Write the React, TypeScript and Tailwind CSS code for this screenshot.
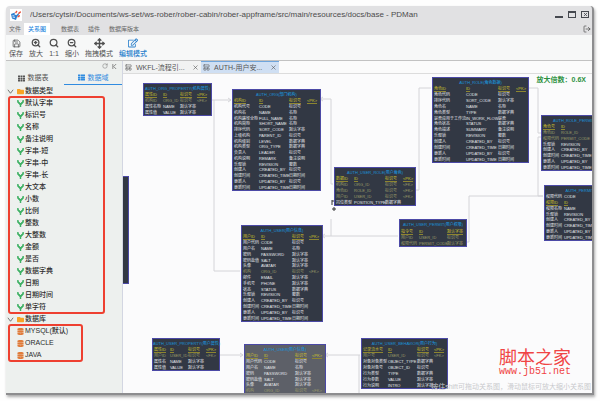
import React from 'react';
import { LayoutPanelTop, LogOut, Move, RotateCw, Save, Search, ZoomIn, ZoomOut, X } from 'lucide-react';
import { FaDatabase, FaFolder, FaRegEdit, FaTh, FaThList } from 'react-icons/fa';

type Row = [string, string, string?, string?];

interface TableNode {
  title: string;
  x: number;
  y: number;
  width: number;
  height: number;
  cols: number[];
  rows: Row[];
  ghost?: boolean;
}

const DATA_TYPES = [
  '默认字串',
  '标识号',
  '名称',
  '备注说明',
  '字串-短',
  '字串-中',
  '字串-长',
  '大文本',
  '小数',
  '比例',
  '整数',
  '大整数',
  '金额',
  '是否',
  '数据字典',
  '日期',
  '日期时间',
  '单字符',
];

const DATABASES = ['MYSQL(默认)', 'ORACLE', 'JAVA'];

const MENUS = ['文件', '关系图', '数据表', '插件', '数据库版本'];

const AUDIT_ROWS: Row[] = [
  ['乐观锁', 'REVISION', '整数'],
  ['创建人', 'CREATED_BY', '标识号'],
  ['创建时间', 'CREATED_TIME', '日期时间'],
  ['更新人', 'UPDATED_BY', '标识号'],
  ['更新时间', 'UPDATED_TIME', '日期时间'],
];

const USER_ROWS: Row[] = [
  ['用户ID', 'ID', '标识号', '<PK>'],
  ['用户代码', 'CODE', '标识号'],
  ['用户名', 'NAME', '名称'],
  ['密码', 'PASSWORD', '默认字串'],
  ['密码盐值', 'SALT', '默认字串'],
  ['头像', 'AVATAR', '默认字串'],
  ['机构', 'ORG_ID', '标识号', '<FK>'],
  ['邮件', 'EMAIL', '默认字串'],
  ['手机号', 'PHONE', '默认字串'],
  ['状态', 'STATUS', '数据字典'],
  ...AUDIT_ROWS,
];

const NODES: TableNode[] = [
  {
    title: 'AUTH_ORG_PROPERTY(机构属性)',
    x: 20, y: 9, width: 68, height: 33,
    cols: [18, 17, 17, 15],
    rows: [
      ['属性ID', 'ID', '标识号', '<PK>'],
      ['机构ID', 'ORG_ID', '标识号', '<FK>'],
      ['属性名称', 'NAME', '默认字串'],
      ['属性值', 'VALUE', '默认字串'],
    ],
  },
  {
    title: 'AUTH_ORG(部门机构)',
    x: 109, y: 15, width: 88, height: 102,
    cols: [25, 30, 18, 14],
    rows: [
      ['机构ID', 'ID', '标识号', '<PK>'],
      ['机构代号', 'CODE', '标识号'],
      ['机构名', 'NAME', '名称'],
      ['机构路径全称', 'FULL_NAME', '名称'],
      ['机构简称', 'SHORT_NAME', '名称'],
      ['排序代码', 'SORT_CODE', '默认字串'],
      ['上级机构', 'PARENT_ID', '标识号'],
      ['机构级别', 'LEVEL', '数据字典'],
      ['机构类型', 'ORG_TYPE', '数据字典'],
      ['负责人', 'LEADER', '标识号'],
      ['机构说明', 'REMARK', '备注说明'],
      ...AUDIT_ROWS,
    ],
  },
  {
    title: 'AUTH_ROLE(角色数据)',
    x: 309, y: 3, width: 96, height: 86,
    cols: [32, 32, 18, 13],
    rows: [
      ['角色ID', 'ID', '标识号', '<PK>'],
      ['角色代码', 'CODE', '标识号'],
      ['排序代码', 'SORT_CODE', '默认字串'],
      ['角色名', 'NAME', '名称'],
      ['角色类型', 'TYPE', '数据字典'],
      ['是否应用于工作流', 'IN_WORK_FLOW', '是否'],
      ['角色状态', 'STATUS', '数据字典'],
      ['角色描述', 'SUMMARY', '备注说明'],
      ...AUDIT_ROWS,
    ],
  },
  {
    title: 'AUTH_USER_ROLE(用户角色)',
    x: 211, y: 93, width: 82, height: 39,
    cols: [18, 31, 18, 13],
    rows: [
      ['数据ID', 'ID', '标识号', '<PK>'],
      ['机构ID', 'ORG_ID', '标识号', '<FK>'],
      ['角色ID', 'ROLE_ID', '标识号', '<FK>'],
      ['用户ID', 'USER_ID', '标识号', '<FK>'],
      ['岗位类型', 'POSITION_TYPE', '数据字典'],
    ],
  },
  {
    title: 'AUTH_ROLE_PERMIT(角色权限)',
    x: 418, y: 41, width: 84, height: 56,
    cols: [18, 34, 17, 13],
    rows: [
      ['角色号', 'ID', '标识号', '<PK>'],
      ['角色ID', 'ROLE_ID', '标识号', '<FK>'],
      ['权限代码', 'PERMIT_CODE', '标识号', '<FK>'],
      ...AUDIT_ROWS,
    ],
  },
  {
    title: 'AUTH_PERMIT(权限)',
    x: 421, y: 111, width: 82, height: 56,
    cols: [18, 34, 17, 11],
    rows: [
      ['权限代码', 'CODE', '标识号'],
      ['权限ID', 'ID', '标识号', '<PK>'],
      ['权限名称', 'NAME', '名称'],
      ...AUDIT_ROWS,
    ],
  },
  {
    title: 'AUTH_USER(用户信息)',
    x: 118, y: 151, width: 81, height: 97,
    cols: [18, 31, 17, 14],
    rows: USER_ROWS,
  },
  {
    title: 'AUTH_USER_PERMIT(用户权限)',
    x: 276, y: 145, width: 68, height: 28,
    cols: [18, 28, 20],
    rows: [
      ['指令号', 'ID', '默认字串', '<PK>'],
      ['用户ID', 'USER_ID', '标识号', '<FK>'],
      ['权限代码', 'PERMIT_CODE', '默认字串', '<FK>'],
    ],
  },
  {
    title: 'AUTH_USER_PROPERTY(用户属性)',
    x: 29, y: 264, width: 67, height: 33,
    cols: [16, 18, 18, 14],
    rows: [
      ['属性ID', 'ID', '标识号', '<PK>'],
      ['用户ID', 'USER_ID', '标识号', '<FK>'],
      ['属性名', 'NAME', '默认字串'],
      ['属性值', 'VALUE', '默认字串'],
    ],
  },
  {
    title: 'AUTH_USER(用户信息)',
    x: 121, y: 270, width: 81, height: 97,
    cols: [18, 31, 17, 14],
    rows: USER_ROWS,
    ghost: true,
  },
  {
    title: 'AUTH_USER_BEHAVIOR(用户行为)',
    x: 238, y: 264, width: 86, height: 51,
    cols: [25, 29, 17, 14],
    rows: [
      ['记录流水号', 'ID', '标识号', '<PK>'],
      ['用户号', 'USER_ID', '标识号', '<FK>'],
      ['对象对象类型', 'OBJECT_TYPE', '数据字典'],
      ['对象对象号', 'OBJECT_ID', '标识号'],
      ['行为类型', 'TYPE', '数据字典'],
      ['行为参数', 'VALUE', '默认字串'],
      ['行为说明', 'INTRO', '默认字串'],
    ],
  },
];

// Connectors between entities, in canvas coordinates
const LINKS = [
  'M88 26H108',
  'M91 26V197H117',
  'M197 25H208V110H210',
  'M292 116H296V14H308',
  'M405 14H415V59H418',
  'M418 63H415V122H420',
  'M344 168H346V122H420',
  'M199 162H275',
  'M208 145V162',
  'M96 281H120',
  'M202 281H237',
  'M236 281V330',
];

const rowColor = (row: Row) => {
  if (row[3] === '<PK>') return 'text-[#cfc02a]';
  if (row[3] === '<FK>') return 'text-[#9b9d68]';
  return 'text-[#e4e6ea]';
};

const EntityNode: React.FC<{ node: TableNode }> = ({ node }) => (
  <table
    className={`absolute table-fixed border-separate border-spacing-0 border border-[#4b49a6] text-[4px] leading-[5px] whitespace-nowrap ${
      node.ghost ? 'bg-[#5d6068]' : 'bg-[#323844]'
    }`}
    style={{ left: node.x, top: node.y, width: node.width, height: node.height }}
  >
    <colgroup>
      {node.cols.map((width, i) => (
        <col key={i} style={{ width }} />
      ))}
    </colgroup>
    <thead>
      <tr className="h-2">
        <th colSpan={node.cols.length} className="p-0 text-center align-middle font-medium text-[#1a93da]">
          {node.title}
        </th>
      </tr>
    </thead>
    <tbody>
      {node.rows.map((row) => (
        <tr key={row[1]} className={rowColor(row)}>
          {node.cols.map((_, i) => (
            <td key={i} className="p-0 pl-px align-middle">
              {row[3] === '<PK>' ? <u className="decoration-[#8d8530]">{row[i]}</u> : row[i]}
            </td>
          ))}
        </tr>
      ))}
    </tbody>
  </table>
);

const TypeIcon = () => (
  <svg viewBox="0 0 12 12" className="size-[7px] shrink-0" fill="none" stroke="#3fb165" strokeWidth="2.500">
    <path d="M1.500 0v3L6 7.500 10.500 3V0M6 7v5" />
    <path d="M1.500 3L6 8l4.500-5" />
  </svg>
);

const Chevron = () => (
  <svg viewBox="0 0 8 8" className="size-[7px] shrink-0" fill="none" stroke="#666">
    <path d="M1 2l3 4 3-4" />
  </svg>
);

const TitleBar = () => (
  <div className="flex h-[17px] shrink-0 items-center pl-1">
    <svg viewBox="0 0 24 24" className="size-3 shrink-0 bg-white">
      <path d="M2 10l8-3-1 4 6 2-3 9-8-3z" fill="#2f7fd0" />
      <path d="M5 13l4 1M5 16l5 1" stroke="#fff" strokeWidth="1.500" />
      <path d="M10 7l3-4 2 2-3 4zM16 8l5-4 1 3-5 4zM15 13l5-1-1 4-4 1z" fill="#e8523c" />
      <path d="M12 13l4-4 2 2-4 4z" fill="#2f7fd0" />
    </svg>
    <h1 className="ml-2 flex-1 truncate text-[8px] leading-3 text-[#4c4c4c]">
      /Users/cytsir/Documents/ws-set/ws-rober/rober-cabin/rober-appframe/src/main/resources/docs/base - PDMan
    </h1>
    <div className="flex items-center gap-[5px] pr-[3px] text-[#45484f]">
      <button aria-label="Minimize" className="flex size-2 items-end pb-px">
        <span className="h-[2px] w-full bg-current" />
      </button>
      <button aria-label="Maximize" className="h-[7px] w-2 border border-t-2 border-current" />
      <button aria-label="Close" className="flex h-[7px] w-2 items-center justify-center border border-current">
        <X size={5} strokeWidth={4} />
      </button>
    </div>
  </div>
);

const MenuBar = () => (
  <nav className="flex h-3 shrink-0 items-stretch text-[6px] text-[#666]">
    {MENUS.map((menu, i) => (
      <button
        key={menu}
        className={
          i === 0
            ? 'w-[18px]'
            : i === 1
              ? 'mr-[6px] w-[26px] bg-white font-medium text-[#2f8be0]'
              : 'pr-1 pl-[5px]'
        }
      >
        {menu}
      </button>
    ))}
    <button aria-label="Exit" className="ml-auto pr-px text-[#444]">
      <LogOut size={8} />
    </button>
  </nav>
);

const TOOLS = [
  { label: '保存', icon: <Save size={9} strokeWidth={2} /> },
  { label: '放大', icon: <ZoomIn size={10} strokeWidth={3} /> },
  { label: '1:1', icon: <Search size={10} strokeWidth={3} /> },
  { label: '缩小', icon: <ZoomOut size={10} strokeWidth={3} /> },
  { label: '拖拽模式', icon: <Move size={11} strokeWidth={3} /> },
  { label: '编辑模式', icon: <FaRegEdit size={10} />, active: true },
];

const Toolbar = () => (
  <div className="flex h-[26px] shrink-0 gap-[6px] border-b border-[#c2c2c2] bg-[#f7f8f8] pl-[3px]">
    {TOOLS.map((tool) => (
      <button
        key={tool.label}
        className={`flex flex-col items-center pt-[2px] text-[7px] leading-[10px] ${
          tool.active ? 'font-medium text-[#2a80cc]' : 'text-[#505050]'
        }`}
      >
        <span className="flex h-3 items-center">{tool.icon}</span>
        {tool.label}
      </button>
    ))}
  </div>
);

const TreeGroup: React.FC<{
  label: string;
  items: string[];
  icon: React.ReactNode;
  width: string;
}> = ({ label, items, icon, width }) => (
  <section>
    <h2 className="flex h-3 items-center gap-[3px] pl-px font-medium">
      <Chevron />
      <span className="flex items-center gap-px">
        <FaFolder size={7} color="#f7a325" />
        {label}
      </span>
    </h2>
    <ul className={`ml-[3px] rounded-xs outline-2 -outline-offset-1 outline-[#ee4030] ${width}`}>
      {items.map((item) => (
        <li key={item} className="flex h-3 items-center gap-px pl-2 font-medium">
          {icon}
          {item}
        </li>
      ))}
    </ul>
  </section>
);

const Sidebar = () => (
  <aside className="flex w-[117px] shrink-0 flex-col border-r border-[#d3d6e2] bg-[#edf0ee] text-[7px] leading-[10px] text-[#2c2c2c]">
    <div className="flex h-[10px] items-center justify-end gap-1 pr-[5px] text-[#777]">
      <RotateCw size={6} />
      <svg viewBox="0 0 6 6" className="size-[5px]" fill="none" stroke="currentColor">
        <path d="M1 0v6M5 0L2 3l3 3" />
      </svg>
    </div>
    <div className="flex h-[14px]">
      <button className="flex w-1/2 items-center justify-center gap-[3px] pr-1 text-[#555]">
        <FaTh size={7} />
        数据表
      </button>
      <button className="flex w-1/2 items-center justify-center gap-[3px] border-b border-[#2f8be0] text-[#2f8be0]">
        <FaThList size={7} />
        数据域
      </button>
    </div>
    <TreeGroup label="数据类型" items={DATA_TYPES} icon={<TypeIcon />} width="w-[95px]" />
    <TreeGroup
      label="数据库"
      items={DATABASES}
      icon={<FaDatabase size={7} color="#e07b3a" />}
      width="w-[73px]"
    />
  </aside>
);

const FileTabs = () => (
  <div className="flex h-[13px] shrink-0 border-b border-[#dcdcdc] text-[7px] leading-[10px] text-[#555]">
    {['WKFL-流程引...', 'AUTH-用户安...'].map((tab, i) => (
      <button
        key={tab}
        className={`flex w-[78px] items-center gap-1 border-t px-[2px] ${
          i === 1 ? 'border-[#6fa5dc] bg-[#cfdff3]' : 'border-transparent bg-[#f1f2f2]'
        }`}
      >
        <LayoutPanelTop size={7} />
        <span className="flex-1 text-left">{tab}</span>
        <X size={7} />
      </button>
    ))}
  </div>
);

const Canvas = () => (
  <div className="relative min-h-0 flex-1 overflow-hidden bg-[#fbfbfc]">
    <svg className="absolute inset-0 size-full" fill="none" stroke="#d4d4d8">
      {LINKS.map((d) => (
        <path key={d} d={d} />
      ))}
      <path d="M105 24l3 2-3 2M200 23l-3 2 3 2M202 160l-3 2 3 2M117 279l3 2-3 2M205 279l-3 2 3 2" />
    </svg>
    <div className="absolute top-[102px] left-0 h-[108px] w-[6px] border border-l-0 border-[#4b49a6] bg-[#323844]" />
    {NODES.map((node, i) => (
      <EntityNode key={i} node={node} />
    ))}
    <svg viewBox="0 0 6 12" className="absolute top-[126px] left-[208px] h-3 w-[6px]" fill="none" stroke="#333">
      <path d="M1 0v5M1 1h2M1 9h4M3 7v4" />
    </svg>
    <p className="absolute top-px right-[6px] text-[7px] leading-[10px] font-bold text-[#2c9140]">放大倍数：0.6X</p>
    <div className="absolute right-[21px] bottom-[17px] flex flex-col items-center text-[#f04444]">
      <span className="font-['Liberation_Serif','Noto_Sans_CJK_SC',serif] text-[18px] leading-[18px]">脚本之家</span>
      <span className="font-['Liberation_Mono',monospace] text-[10px] leading-[9px]">www.jb51.net</span>
    </div>
    <p className="absolute right-px bottom-px text-[7px] leading-[10px] text-[#c9cacd]">
      按住shift可拖动关系图，滑动鼠标可放大缩小关系图
    </p>
  </div>
);

export default function App() {
  return (
    <div className="h-screen bg-[#fefefe] p-[6px] font-['Liberation_Sans','Noto_Sans_CJK_SC',sans-serif]">
      <div className="flex h-full flex-col overflow-hidden rounded-t-sm border-r-2 border-b-2 border-[#8d8d8f] bg-[#e1e1e3] shadow-[1px_2px_3px_#aaa]">
        <TitleBar />
        <MenuBar />
        <Toolbar />
        <div className="flex min-h-0 flex-1">
          <Sidebar />
          <main className="flex min-w-0 flex-1 flex-col bg-[#fbfbfb]">
            <FileTabs />
            <Canvas />
          </main>
        </div>
      </div>
    </div>
  );
}
